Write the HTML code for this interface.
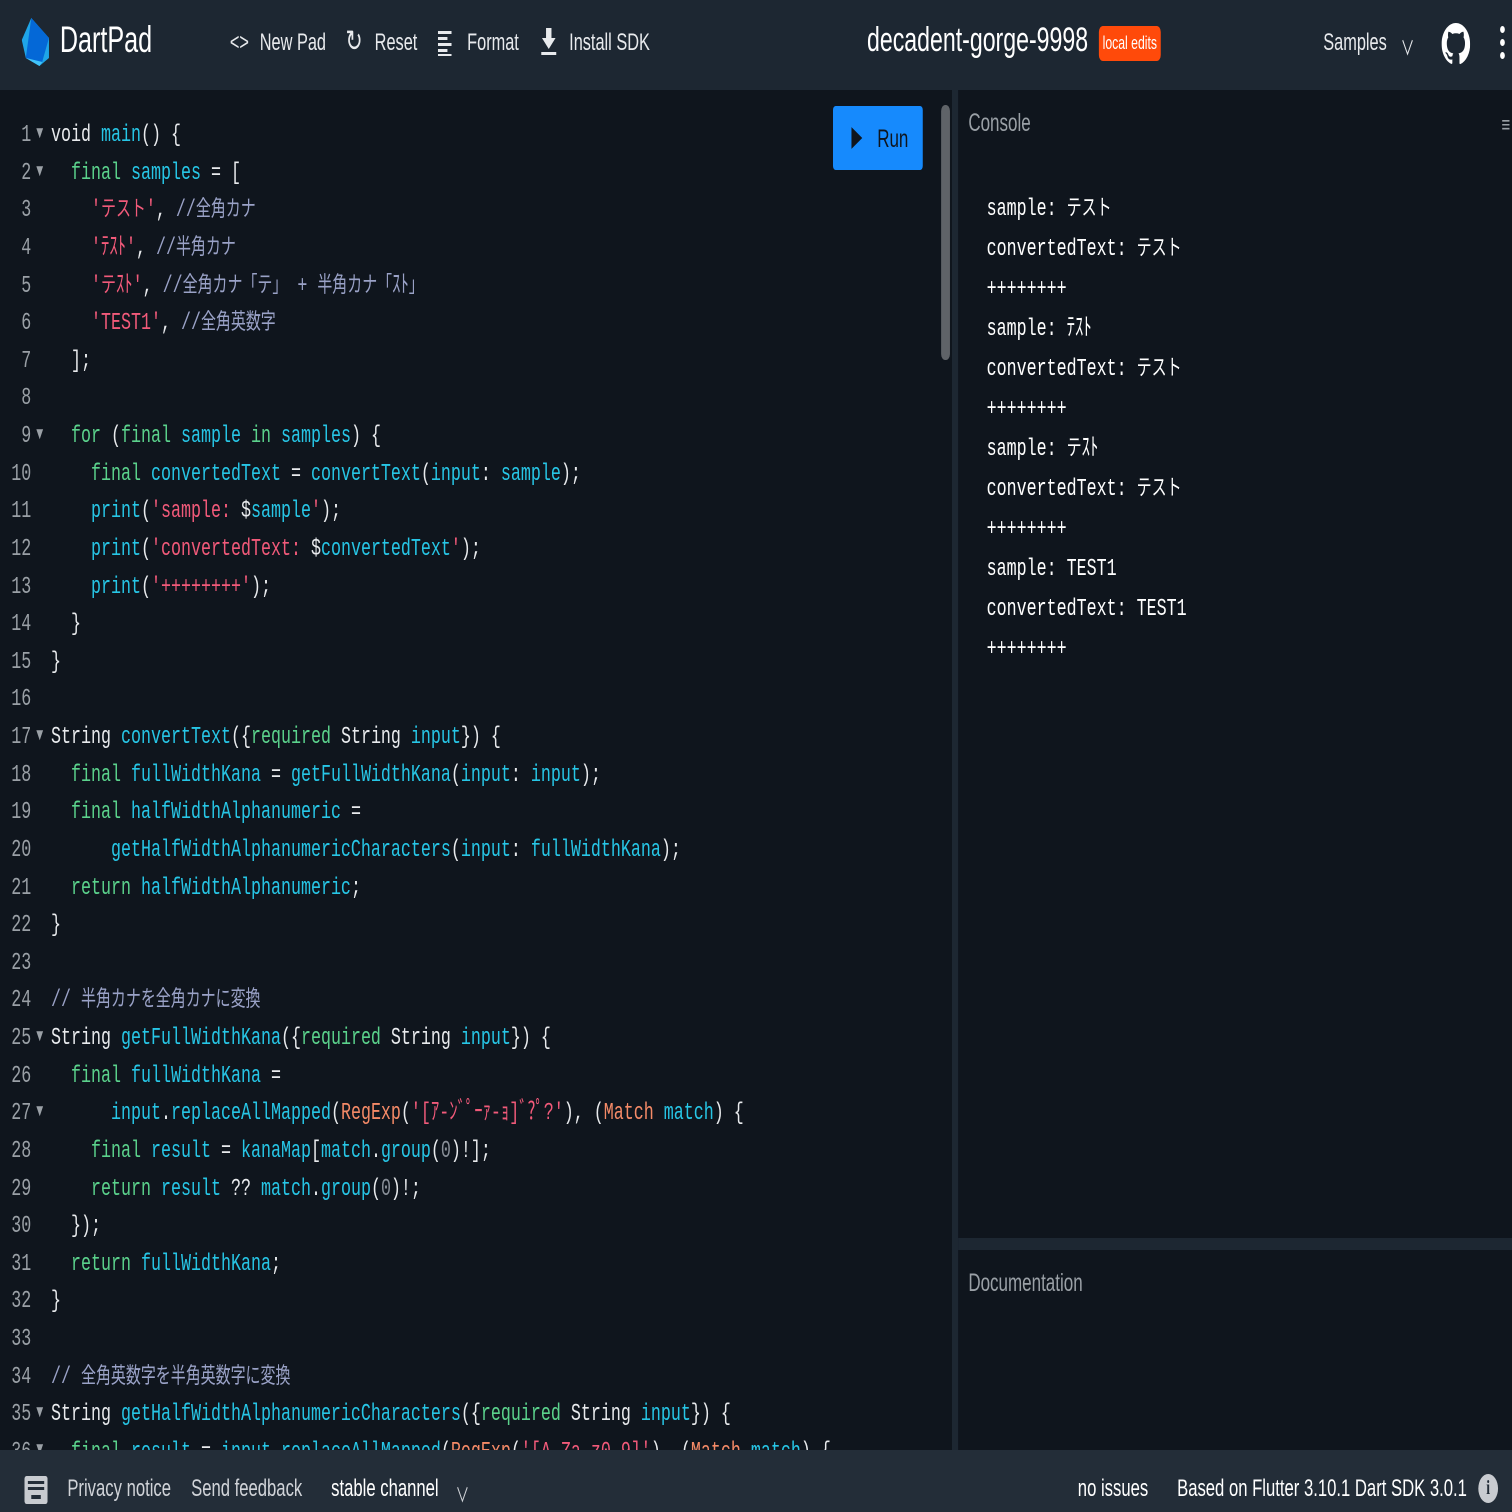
<!DOCTYPE html>
<html><head><meta charset="utf-8"><style>
html,body{margin:0;padding:0;width:1512px;height:1512px;overflow:hidden;background:#0f151d}
#w{position:absolute;left:0;top:0;width:2224px;height:1512px;transform:scaleX(0.68);transform-origin:0 0;font-family:"Liberation Sans","Noto Sans CJK JP",sans-serif;color:#e8eaed}
.a{position:absolute;white-space:pre}
#hdr{position:absolute;left:0;top:0;width:2224px;height:90px;background:#1d2732}
.nav{font-size:24px;top:29px;color:#e8eaed}
pre{margin:0;font-family:"Liberation Mono","Noto Sans CJK JP",monospace;font-size:24.5px;line-height:37.62px}
.j{font-size:22px}
.k{color:#5bd28c}.c{color:#27c6e6}.s{color:#f25a7a}.m{color:#9aa2c7}.o{color:#f58a67}.w{color:#e8eaed}.g{color:#8a9099}
#ln{position:absolute;left:0;top:117px;width:46px;text-align:right;color:#9aa0a6}
.f{position:absolute;left:50px;color:#9aa0a6;font-size:17px}
#foot{position:absolute;left:0;top:1450px;width:2224px;height:62px;background:#232d38}
.ft{font-size:24.5px;top:1475px;color:#d0d3d8}
</style></head><body><div id="w">
<div id="hdr"></div>
<svg class="a" style="left:32px;top:18px" width="44" height="48" viewBox="0 0 44 48"><polygon points="14,0 40,20 40,40 26,48 6,40 0,22" fill="#1fa5e8"/><polygon points="14,0 40,20 30,44 6,40" fill="#0468d7"/><polygon points="6,40 30,44 26,48" fill="#42c4fa"/></svg>
<div class="a" style="left:88px;top:19px;font-size:37px;color:#fff">DartPad</div>
<div class="a nav" style="left:338px;font-size:24px;top:29px">&lt;&gt;</div>
<div class="a nav" style="left:382px">New Pad</div>
<div class="a nav" style="left:508px;font-size:30px;top:24px">↻</div>
<div class="a nav" style="left:551px">Reset</div>
<svg class="a" style="left:644px;top:30px" width="26" height="26"><g fill="#e8eaed"><rect x="0" y="1" width="20" height="3"/><rect x="0" y="7" width="14" height="3"/><rect x="0" y="13" width="20" height="3"/><rect x="0" y="19" width="14" height="3"/><rect x="0" y="24" width="20" height="2"/></g></svg>
<div class="a nav" style="left:687px">Format</div>
<svg class="a" style="left:795px;top:28px" width="24" height="28"><path d="M8 0h8v10h6L12 21 2 10h6z" fill="#e8eaed"/><rect x="1" y="24" width="22" height="3" fill="#e8eaed"/></svg>
<div class="a nav" style="left:837px">Install SDK</div>
<div class="a" style="left:1275px;top:21px;font-size:34px;color:#fff">decadent-gorge-9998</div>
<div class="a" style="left:1616px;top:26px;width:91px;height:35px;background:#ff4a0a;border-radius:6px;color:#fff;font-size:18px;line-height:35px;text-align:center">local edits</div>
<div class="a nav" style="left:1946px">Samples</div>
<div class="a nav" style="left:2060px;font-size:20px;top:32px">∨</div>
<svg class="a" style="left:2120px;top:22px" width="42" height="44" viewBox="0 0 16 16"><path fill="#fff" d="M8 0C3.580 0 0 3.58 0 8c0 3.54 2.29 6.53 5.470 7.59.4.07.55-.17.55-.38v-1.33c-2.23.49-2.7-1.07-2.7-1.07-.36-.92-.89-1.170-.89-1.17-.73-.5.06-.49.06-.49.8.06 1.23.83 1.23.83.71 1.22 1.87.87 2.33.66.07-.52.28-.87.51-1.07-1.78-.2-3.64-.89-3.64-3.95 0-.87.31-1.59.82-2.15-.08-.2-.36-1.02.08-2.12 0 0 .67-.21 2.2.82a7.7 7.7 0 0 1 4 0c1.53-1.04 2.2-.82 2.2-.82.44 1.1.16 1.92.08 2.12.51.56.82 1.27.82 2.15 0 3.07-1.87 3.75-3.65 3.95.29.25.54.73.54 1.48v2.2c0 .21.15.46.55.38A8 8 0 0 0 16 8c0-4.42-3.58-8-8-8z"/></svg>
<div class="a" style="left:2206px;top:26px;width:7px;height:7px;border-radius:50%;background:#fff;box-shadow:0 13px 0 #fff,0 26px 0 #fff"></div>

<pre id="ln">1
2
3
4
5
6
7
8
9
10
11
12
13
14
15
16
17
18
19
20
21
22
23
24
25
26
27
28
29
30
31
32
33
34
35
36</pre>
<div class="f" style="top:123px">▼</div><div class="f" style="top:161px">▼</div><div class="f" style="top:424px">▼</div><div class="f" style="top:725px">▼</div><div class="f" style="top:1026px">▼</div><div class="f" style="top:1101px">▼</div><div class="f" style="top:1402px">▼</div><div class="f" style="top:1439px">▼</div>
<div class="a" style="left:0;top:90px;width:1382px;height:1360px;overflow:hidden">
<pre style="position:absolute;left:75px;top:27px" class="w"><span class="w">void</span> <span class="c">main</span>() {
  <span class="k">final</span> <span class="c">samples</span> = [
    <span class="s">'<span class="j">テスト</span>'</span>, <span class="m">//<span class="j">全角カナ</span></span>
    <span class="s">'ﾃｽﾄ'</span>, <span class="m">//<span class="j">半角カナ</span></span>
    <span class="s">'<span class="j">テ</span>ｽﾄ'</span>, <span class="m">//<span class="j">全角カナ「テ」</span> + <span class="j">半角カナ「</span>ｽﾄ<span class="j">」</span></span>
    <span class="s">'TEST1'</span>, <span class="m">//<span class="j">全角英数字</span></span>
  ];

  <span class="k">for</span> (<span class="k">final</span> <span class="c">sample</span> <span class="k">in</span> <span class="c">samples</span>) {
    <span class="k">final</span> <span class="c">convertedText</span> = <span class="c">convertText</span>(<span class="c">input</span>: <span class="c">sample</span>);
    <span class="c">print</span>(<span class="s">'sample: </span>$<span class="c">sample</span><span class="s">'</span>);
    <span class="c">print</span>(<span class="s">'convertedText: </span>$<span class="c">convertedText</span><span class="s">'</span>);
    <span class="c">print</span>(<span class="s">'++++++++'</span>);
  }
}

<span class="w">String</span> <span class="c">convertText</span>({<span class="k">required</span> String <span class="c">input</span>}) {
  <span class="k">final</span> <span class="c">fullWidthKana</span> = <span class="c">getFullWidthKana</span>(<span class="c">input</span>: <span class="c">input</span>);
  <span class="k">final</span> <span class="c">halfWidthAlphanumeric</span> =
      <span class="c">getHalfWidthAlphanumericCharacters</span>(<span class="c">input</span>: <span class="c">fullWidthKana</span>);
  <span class="k">return</span> <span class="c">halfWidthAlphanumeric</span>;
}

<span class="m">// <span class="j">半角カナを全角カナに変換</span></span>
String <span class="c">getFullWidthKana</span>({<span class="k">required</span> String <span class="c">input</span>}) {
  <span class="k">final</span> <span class="c">fullWidthKana</span> =
      <span class="c">input</span>.<span class="c">replaceAllMapped</span>(<span class="o">RegExp</span>(<span class="s">'[ｱ-ﾝﾞﾟｰｧ-ｮ]ﾞ?ﾟ?'</span>), (<span class="o">Match</span> <span class="c">match</span>) {
    <span class="k">final</span> <span class="c">result</span> = <span class="c">kanaMap</span>[<span class="c">match</span>.<span class="c">group</span>(<span class="g">0</span>)!];
    <span class="k">return</span> <span class="c">result</span> ?? <span class="c">match</span>.<span class="c">group</span>(<span class="g">0</span>)!;
  });
  <span class="k">return</span> <span class="c">fullWidthKana</span>;
}

<span class="m">// <span class="j">全角英数字を半角英数字に変換</span></span>
String <span class="c">getHalfWidthAlphanumericCharacters</span>({<span class="k">required</span> String <span class="c">input</span>}) {
  <span class="k">final</span> <span class="c">result</span> = <span class="c">input</span>.<span class="c">replaceAllMapped</span>(<span class="o">RegExp</span>(<span class="s">'[A-Za-z0-9]'</span>), (<span class="o">Match</span> <span class="c">match</span>) {</pre>
</div>
<div class="a" style="left:1225px;top:106px;width:132px;height:64px;background:#168afd;border-radius:4px"></div>
<svg class="a" style="left:1252px;top:127px" width="18" height="22"><polygon points="0,0 16,11 0,22" fill="#0f151d"/></svg>
<div class="a" style="left:1290px;top:125px;font-size:25px;color:#0f151d">Run</div>
<div class="a" style="left:1384px;top:105px;width:13px;height:255px;border-radius:6px;background:#5f6368"></div>
<div class="a" style="left:1400px;top:90px;width:9px;height:1360px;background:#1d2732"></div>
<div class="a" style="left:1409px;top:1238px;width:815px;height:12px;background:#1d2732"></div>
<div class="a" style="left:1424px;top:109px;font-size:25px;color:#9aa0a6">Console</div>
<div class="a" style="left:2208px;top:112px;font-size:22px;color:#9aa0a6">≡</div>
<pre class="a" style="left:1451px;top:190px;line-height:40px;color:#fff">sample: <span class="j">テスト</span>
convertedText: <span class="j">テスト</span>
++++++++
sample: ﾃｽﾄ
convertedText: <span class="j">テスト</span>
++++++++
sample: <span class="j">テ</span>ｽﾄ
convertedText: <span class="j">テスト</span>
++++++++
sample: TEST1
convertedText: TEST1
++++++++</pre>
<div class="a" style="left:1424px;top:1269px;font-size:25px;color:#9aa0a6">Documentation</div>
<div id="foot"></div>
<svg class="a" style="left:36px;top:1476px" width="34" height="28"><rect width="34" height="28" rx="3" fill="#c8cbd0"/><g fill="#232d38"><rect x="5" y="5" width="24" height="3"/><rect x="5" y="11" width="24" height="3"/><rect x="10" y="19" width="14" height="4"/></g></svg>
<div class="a ft" style="left:99px">Privacy notice</div>
<div class="a ft" style="left:281px">Send feedback</div>
<div class="a ft" style="left:487px;color:#fff">stable channel</div>
<div class="a ft" style="left:670px;font-size:20px;top:1479px">∨</div>
<div class="a ft" style="left:1585px;color:#fff">no issues</div>
<div class="a ft" style="left:1731px;color:#fff">Based on Flutter 3.10.1 Dart SDK 3.0.1</div>
<div class="a" style="left:2174px;top:1474px;width:29px;height:29px;border-radius:50%;background:#c8cbd0;color:#232d38;font-size:20px;font-weight:bold;text-align:center;line-height:29px;font-family:'Liberation Serif',serif">i</div>
</div></body></html>
